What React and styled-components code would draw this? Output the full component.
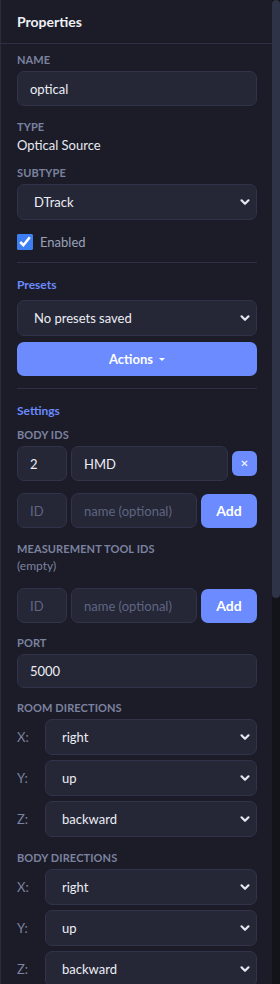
import React from "react";
import styled, { createGlobalStyle } from "styled-components";

const Global = createGlobalStyle`
  html, body { margin: 0; padding: 0; background: #1b1c27; overflow: hidden; }
  body { font-family: Lato, "Noto Sans", sans-serif; }
  * { box-sizing: border-box; }
`;

const Frame = styled.div`
  width: 280px;
  height: 984px;
  display: flex;
  overflow: hidden;
  background: #1b1c27;
`;

const Panel = styled.div`
  width: 272px;
  flex: none;
  height: 984px;
  overflow: hidden;
  border-left: 1px solid #2a2c3b;
  color: #e4e6ef;
`;

const ScrollTrack = styled.div`
  width: 8px;
  flex: none;
  height: 984px;
  background: #131419;
`;

const ScrollThumb = styled.div`
  width: 8px;
  height: 598px;
  background: #2f3348;
  border-radius: 4px;
`;

const Header = styled.div`
  height: 44px;
  display: flex;
  align-items: center;
  padding: 0 16px;
  border-bottom: 1px solid #2e3144;
  font-size: 14px;
  font-weight: 700;
  color: #eef0f6;
`;

const Body = styled.div`
  padding: 8px 15px 40px 16px;
  display: flex;
  flex-direction: column;
`;

const Field = styled.div`
  display: flex;
  flex-direction: column;
  margin-bottom: ${(p) => p.$mb ?? 13}px;
`;

const Label = styled.div`
  font-size: 11px;
  font-weight: 700;
  letter-spacing: 0.1px;
  text-transform: uppercase;
  color: #7b82a0;
  line-height: 15px;
  margin-bottom: ${(p) => p.$mb ?? 4}px;
`;

const Value = styled.div`
  font-size: 13px;
  line-height: 18px;
  color: #e8eaf2;
`;

const Input = styled.input`
  height: ${(p) => p.$h ?? 35}px;
  width: ${(p) => (p.$w ? `${p.$w}px` : "100%")};
  flex: ${(p) => (p.$grow ? 1 : "none")};
  min-width: 0;
  background: #252736;
  border: 1px solid #30334a;
  border-radius: 7px;
  padding: 0 12px;
  font-family: inherit;
  font-size: 13px;
  color: #eceef5;
  outline: none;
  &::placeholder { color: #5f6582; }
`;

const SelectWrap = styled.div`
  position: relative;
  width: 100%;
  flex: 1;
`;

const Select = styled.select`
  appearance: none;
  width: 100%;
  height: 36px;
  background: #252736;
  border: 1px solid #30334a;
  border-radius: 7px;
  padding: 0 16px;
  font-family: inherit;
  font-size: 13px;
  color: #eceef5;
  outline: none;
`;

const Chevron = styled.svg`
  position: absolute;
  right: 6px;
  top: 50%;
  transform: translateY(-50%);
  pointer-events: none;
`;

const Dropdown = ({ value }) => (
  <SelectWrap>
    <Select defaultValue={value}>
      <option>{value}</option>
    </Select>
    <Chevron width="12" height="12" viewBox="0 0 12 12">
      <path d="M2.5 4.3 L6 7.8 L9.5 4.3" fill="none" stroke="#e6e8f0" strokeWidth="2.2" strokeLinecap="round" strokeLinejoin="round" />
    </Chevron>
  </SelectWrap>
);

const CheckRow = styled.label`
  display: flex;
  align-items: center;
  gap: 7px;
  font-size: 13px;
  color: #9aa0b8;
  margin: 1px 0 12px;
`;

const Check = styled.input`
  width: 16px;
  height: 16px;
  margin: 0;
  accent-color: #3d7ff2;
`;

const Divider = styled.div`
  height: 1px;
  background: #2e3144;
  margin-bottom: 14px;
`;

const SectionTitle = styled.div`
  font-size: 12px;
  font-weight: 700;
  color: #6b8afd;
  line-height: 16px;
  margin-bottom: ${(p) => p.$mb ?? 7}px;
`;

const PrimaryButton = styled.button`
  height: 34px;
  width: ${(p) => (p.$w ? `${p.$w}px` : "100%")};
  flex: none;
  border: none;
  border-radius: 7px;
  background: #6b8bfe;
  color: #ffffff;
  font-family: inherit;
  font-size: ${(p) => p.$fs ?? 13}px;
  font-weight: 700;
  display: flex;
  align-items: center;
  justify-content: center;
  gap: 6px;
  margin-top: ${(p) => p.$mt ?? 0}px;
  margin-bottom: ${(p) => p.$mb ?? 0}px;
`;

const Caret = styled.span`
  width: 0;
  height: 0;
  border-left: 3px solid transparent;
  border-right: 3px solid transparent;
  border-top: 3px solid #ffffff;
`;

const Row = styled.div`
  display: flex;
  align-items: center;
  gap: 4px;
  margin-bottom: ${(p) => p.$mb ?? 0}px;
`;

const RemoveButton = styled.button`
  width: 25px;
  height: 25px;
  flex: none;
  border: none;
  border-radius: 6px;
  background: #6b8bfe;
  color: #fff;
  font-family: "DejaVu Sans", sans-serif;
  font-size: 10px;
  font-weight: 700;
  padding: 0;
  display: flex;
  align-items: center;
  justify-content: center;
`;

const Empty = styled.div`
  font-size: 12px;
  color: #7b82a0;
  line-height: 16px;
  margin-bottom: 14px;
`;

const DirRow = styled.div`
  display: grid;
  grid-template-columns: 28px 1fr;
  align-items: center;
  margin-bottom: 5px;
`;

const DirLabel = styled.span`
  font-size: 13px;
  color: #7b82a0;
`;

const Directions = ({ title }) => (
  <Field $mb={8}>
    <Label>{title}</Label>
    {[["X:", "right"], ["Y:", "up"], ["Z:", "backward"]].map(([k, v]) => (
      <DirRow key={k}>
        <DirLabel>{k}</DirLabel>
        <Dropdown value={v} />
      </DirRow>
    ))}
  </Field>
);

export default function App() {
  return (
    <>
      <Global />
      <Frame>
        <Panel>
          <Header>Properties</Header>
          <Body>
            <Field>
              <Label>Name</Label>
              <Input defaultValue="optical" />
            </Field>
            <Field $mb={11}>
              <Label $mb={2}>Type</Label>
              <Value>Optical Source</Value>
            </Field>
            <Field $mb={13}>
              <Label>Subtype</Label>
              <Dropdown value="DTrack" />
            </Field>
            <CheckRow>
              <Check type="checkbox" defaultChecked />
              Enabled
            </CheckRow>
            <Divider />
            <SectionTitle>Presets</SectionTitle>
            <Dropdown value="No presets saved" />
            <PrimaryButton $mt={6} $mb={12}>
              Actions <Caret />
            </PrimaryButton>
            <Divider />
            <SectionTitle $mb={8}>Settings</SectionTitle>
            <Field>
              <Label>Body IDs</Label>
              <Row $mb={12}>
                <Input $w={50} defaultValue="2" />
                <Input $grow defaultValue="HMD" />
                <RemoveButton>✕</RemoveButton>
              </Row>
              <Row>
                <Input $w={50} placeholder="ID" />
                <Input $grow placeholder="name (optional)" />
                <PrimaryButton $w={56} $fs={14}>Add</PrimaryButton>
              </Row>
            </Field>
            <Field $mb={12}>
              <Label $mb={2}>Measurement Tool IDs</Label>
              <Empty>(empty)</Empty>
              <Row>
                <Input $w={50} placeholder="ID" />
                <Input $grow placeholder="name (optional)" />
                <PrimaryButton $w={56} $fs={14}>Add</PrimaryButton>
              </Row>
            </Field>
            <Field $mb={12}>
              <Label>Port</Label>
              <Input $h={34} defaultValue="5000" />
            </Field>
            <Directions title="Room Directions" />
            <Directions title="Body Directions" />
          </Body>
        </Panel>
        <ScrollTrack>
          <ScrollThumb />
        </ScrollTrack>
      </Frame>
    </>
  );
}
